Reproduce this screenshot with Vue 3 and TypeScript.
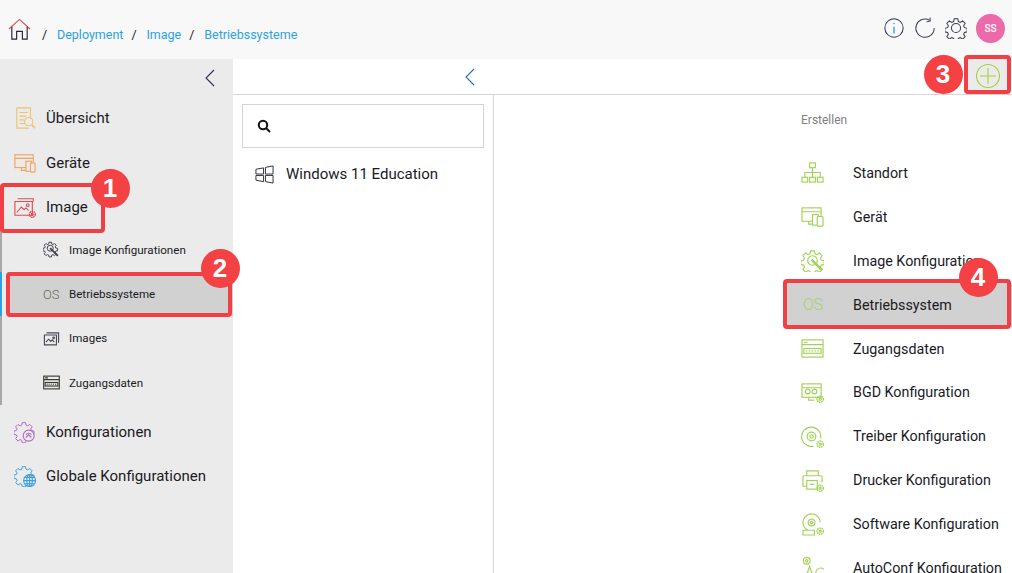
<script setup lang="ts">
interface NavItem {
  label: string;
  icon: string;
  tone: string;
  active?: boolean;
}

const gearPath =
  "M10 2h4l.6 3 2 .9 2.6-1.7 2.800 2.800-1.700 2.600.9 2 3 .6v4l-3 .6-.9 2 1.700 2.600-2.800 2.800-2.600-1.700-2 .9-.6 3h-4l-.6-3-2-.9-2.600 1.700-2.800-2.800 1.700-2.600-.9-2-3-.6v-4l3-.6.9-2-1.700-2.600 2.800-2.800 2.600 1.700 2-.9z";

const smallGear = (x: number, y: number) =>
  `<circle cx="${x}" cy="${y}" r="3.2" stroke-dasharray="1.6 .7" stroke-width="1.6"/><circle cx="${x}" cy="${y}" r="1.1"/>`;

const icons: Record<string, string> = {
  overview:
    '<path d="M3 1h15v12M3 1v22h13M6 6h9M6 10h7M6 14h5M6 18h6"/><circle cx="16" cy="16" r="4.500"/><path d="M19.500 19.500l3.500 3.500" stroke-width="2"/>',
  devices:
    '<rect x="1" y="3" width="20" height="14"/><path d="M1 7h20M8 17v3h6"/><rect x="13" y="10" width="6" height="11" fill="#ebebeb"/><rect x="18" y="12" width="5" height="10" rx="1" fill="#ebebeb"/>',
  image:
    '<path d="M4 3h17v3M1 6h19v15H1z"/><path d="M3 18l5-6 3 3 2-2 3 3"/><circle cx="15" cy="10" r="1.500"/>' +
    smallGear(20, 20),
  imageCfg: `<g transform="scale(.85)"><path d="${gearPath}"/><circle cx="12" cy="12" r="5"/></g><path d="M10 10l11 11" stroke-width="2.500"/>`,
  images:
    '<path d="M5 4h17v14M2 7h17v14H2z"/><path d="M4 17l4-4 3 3 2-2 3 3"/><circle cx="15" cy="11" r="1.200"/>',
  access:
    '<rect x="1" y="3" width="22" height="18"/><path d="M1 8h22M3 5.500h4" /><rect x="3" y="12" width="18" height="5"/><path d="M5 14.500h14" stroke-dasharray="1.500 1.500"/>',
  config: `<g transform="scale(.9)"><path d="${gearPath}"/></g><circle cx="16" cy="16" r="6" fill="#ebebeb"/><path d="M13 15a3.500 3.500 0 0 1 6 0M13 18l3-3 3 3"/>`,
  global: `<g transform="scale(.9)"><path d="${gearPath}"/></g><circle cx="17" cy="17" r="6.500" fill="#ebebeb"/><path d="M10.500 17h13M17 10.500v13M12 13.500h10M12 20.500h10"/><ellipse cx="17" cy="17" rx="3" ry="6.500"/>`,
  site:
    '<rect x="9" y="2" width="6" height="5"/><rect x="1" y="17" width="6" height="5"/><rect x="9" y="17" width="6" height="5"/><rect x="17" y="17" width="6" height="5"/><path d="M12 7v10M4 17v-5h16v5"/>',
  device:
    '<rect x="1" y="3" width="20" height="14"/><path d="M1 7h20M8 17v3h6"/><rect x="12" y="10" width="6" height="11" fill="#fff"/><rect x="17" y="12" width="6" height="10" rx="1" fill="#fff"/>',
  imageCfgGreen: `<path d="${gearPath}"/><circle cx="12" cy="12" r="5"/><path d="M11 11l11 11" stroke-width="2.500"/>`,
  bgd:
    '<rect x="1" y="3" width="20" height="14"/><path d="M1 7h20M8 17v3h6"/><circle cx="7" cy="11" r="2.500"/><circle cx="14" cy="11" r="2.500"/>' +
    smallGear(20, 19),
  driver:
    '<path d="M20.500 14A10 10 0 1 0 13 22"/><circle cx="11" cy="12" r="4.500"/><circle cx="11" cy="12" r="1.800"/>' +
    smallGear(20, 20),
  printer:
    '<path d="M6 7V2h12v5M6 18H2V8a1 1 0 0 1 1-1h18a1 1 0 0 1 1 1v6"/><rect x="6" y="12" width="11" height="9"/><path d="M9 16h5"/>' +
    smallGear(20, 20),
  software:
    '<path d="M20 10A9 9 0 1 0 7 18"/><circle cx="11" cy="10" r="3.500"/><circle cx="11" cy="10" r="1.300"/><path d="M2 18h12v5H2z"/>' +
    smallGear(20, 19),
  autoconf:
    '<circle cx="6" cy="5" r="3.500"/><circle cx="6" cy="5" r="1.200"/><path d="M5 22l4-11 4 11M6.500 18h5M24 14a5 5 0 1 0 0 7"/>',
};

const topBefore: NavItem[] = [
  { label: "Übersicht", icon: "overview", tone: "#f2c26e" },
  { label: "Geräte", icon: "devices", tone: "#f3a25c" },
  { label: "Image", icon: "image", tone: "#e04a55" },
];

const subItems: NavItem[] = [
  { label: "Image Konfigurationen", icon: "imageCfg", tone: "#3f3d4a" },
  { label: "Betriebssysteme", icon: "os", tone: "#6f6b62", active: true },
  { label: "Images", icon: "images", tone: "#4b4a58" },
  { label: "Zugangsdaten", icon: "access", tone: "#3d3a34" },
];

const topAfter: NavItem[] = [
  { label: "Konfigurationen", icon: "config", tone: "#b06ec4" },
  { label: "Globale Konfigurationen", icon: "global", tone: "#3f9fdc" },
];

const green = "#a2d158";
const createItems: NavItem[] = [
  { label: "Standort", icon: "site", tone: green },
  { label: "Gerät", icon: "device", tone: green },
  { label: "Image Konfiguration", icon: "imageCfgGreen", tone: green },
  { label: "Betriebssystem", icon: "os", tone: "#a9cf6c", active: true },
  { label: "Zugangsdaten", icon: "access", tone: green },
  { label: "BGD Konfiguration", icon: "bgd", tone: green },
  { label: "Treiber Konfiguration", icon: "driver", tone: green },
  { label: "Drucker Konfiguration", icon: "printer", tone: green },
  { label: "Software Konfiguration", icon: "software", tone: green },
  { label: "AutoConf Konfiguration", icon: "autoconf", tone: green },
];

const crumbs = ["Deployment", "Image", "Betriebssysteme"];

const marks = [
  { n: 1, x: 110, y: 188 },
  { n: 2, x: 220, y: 268 },
  { n: 3, x: 943, y: 74 },
  { n: 4, x: 978, y: 277 },
];
const frames = [
  { x: 0, y: 183, w: 105, h: 50 },
  { x: 6, y: 272, w: 226, h: 45 },
  { x: 964, y: 55, w: 47, h: 39 },
  { x: 783, y: 279, w: 228, h: 50 },
];
</script>

<template>
  <div class="page">
    <header class="topbar">
      <svg class="home" viewBox="0 0 24 24" fill="none" stroke-width="1.200">
        <path d="M1 11.500L12 1.500l11 10" stroke="#d9534a" />
        <path d="M4 9v13h5v-8h6v8h5V9" stroke="#23263a" />
      </svg>
      <nav class="crumbs">
        <template v-for="c in crumbs" :key="c">
          <span class="sep">/</span>
          <a class="crumb">{{ c }}</a>
        </template>
      </nav>
      <div class="tools">
        <svg viewBox="0 0 24 24" fill="none" stroke="#2a3350" stroke-width="1.100">
          <circle cx="12" cy="12" r="10" />
          <path d="M12 10.500V18" stroke="#2e9fdc" stroke-width="1.500" />
          <circle cx="12" cy="7" r=".8" fill="#2e9fdc" stroke="none" />
        </svg>
        <svg viewBox="0 0 24 24" fill="none" stroke="#3a4150" stroke-width="1.100">
          <path d="M17 3.500A10 10 0 1 0 22 12" />
          <path d="M17.500 .5l.2 4-4 .6" />
        </svg>
        <svg viewBox="0 0 24 24" fill="none" stroke="#3a3d48" stroke-width="1.100">
          <path :d="gearPath" />
          <circle cx="12" cy="12" r="5" />
        </svg>
        <span class="avatar">SS</span>
      </div>
    </header>

    <div class="body">
      <aside class="sidebar">
        <div class="collapse">
          <svg viewBox="0 0 12 18" fill="none" stroke="#2a3350" stroke-width="1.100">
            <path d="M10 1L2 9l8 8" />
          </svg>
        </div>
        <div v-for="item in topBefore" :key="item.label" class="nav-row">
          <svg class="nav-icon" viewBox="0 0 24 24" fill="none" stroke-width="1.200" :style="{ stroke: item.tone }" v-html="icons[item.icon]" />
          <span>{{ item.label }}</span>
        </div>
        <div class="sublist">
          <div v-for="item in subItems" :key="item.label" class="sub-row" :class="{ active: item.active }">
            <span v-if="item.icon === 'os'" class="os sub-icon" :style="{ color: item.tone }">OS</span>
            <svg v-else class="sub-icon" viewBox="0 0 24 24" fill="none" stroke-width="1.600" :style="{ stroke: item.tone }" v-html="icons[item.icon]" />
            <span>{{ item.label }}</span>
          </div>
        </div>
        <div v-for="item in topAfter" :key="item.label" class="nav-row after">
          <svg class="nav-icon" viewBox="0 0 24 24" fill="none" stroke-width="1.200" :style="{ stroke: item.tone }" v-html="icons[item.icon]" />
          <span>{{ item.label }}</span>
        </div>
      </aside>

      <main class="main">
        <div class="toolbar">
          <div class="back">
            <svg viewBox="0 0 12 18" fill="none" stroke="#2a6fb0" stroke-width="1.100">
              <path d="M10 1L2 9l8 8" />
            </svg>
          </div>
          <button class="add">
            <svg viewBox="0 0 26 26" fill="none" stroke="#a4d233" stroke-width="1.100">
              <circle cx="13" cy="13" r="11.500" />
              <path d="M13 5v16M5 13h16" />
            </svg>
          </button>
        </div>
        <div class="columns">
          <section class="list">
            <div class="search">
              <svg viewBox="0 0 14 14" fill="none" stroke="#111" stroke-width="2">
                <circle cx="6" cy="6" r="4.200" />
                <path d="M9 9l4 4" />
              </svg>
            </div>
            <div class="os-row">
              <svg viewBox="0 0 20 20" fill="none" stroke="#2b2a3c" stroke-width="1">
                <path d="M1 4.500L9 3v6.500H1zM11 2.500L19 1v8.500h-8zM1 11h8v6.500L1 16zM11 11h8v8l-8-1.500z" />
              </svg>
              <span>Windows 11 Education</span>
            </div>
          </section>
          <section class="create">
            <div class="create-title">Erstellen</div>
            <div v-for="item in createItems" :key="item.label" class="create-row" :class="{ active: item.active }">
              <span v-if="item.icon === 'os'" class="os create-icon" :style="{ color: item.tone }">OS</span>
              <svg v-else class="create-icon" viewBox="0 0 24 24" fill="none" stroke-width="1.200" :style="{ stroke: item.tone }" v-html="icons[item.icon]" />
              <span>{{ item.label }}</span>
            </div>
          </section>
        </div>
      </main>
    </div>

    <div
      v-for="(f, i) in frames"
      :key="'f' + i"
      class="frame"
      :style="{ left: f.x + 'px', top: f.y + 'px', width: f.w + 'px', height: f.h + 'px' }"
    />
    <div
      v-for="m in marks"
      :key="m.n"
      class="mark"
      :style="{ left: m.x - 19.5 + 'px', top: m.y - 19.5 + 'px' }"
    >
      {{ m.n }}
    </div>
  </div>
</template>

<style>
html,
body {
  margin: 0;
  overflow: hidden;
}
</style>

<style scoped>
.page {
  position: relative;
  width: 1012px;
  height: 573px;
  overflow: hidden;
  display: flex;
  flex-direction: column;
  background: #fff;
  color: #1a1a1f;
  font-family: Roboto, "Liberation Sans", sans-serif;
}

.topbar {
  height: 59px;
  flex: none;
  display: flex;
  align-items: center;
  background: #f8f8f8;
  padding: 0 7px 0 8px;
  box-sizing: border-box;
}
.home {
  width: 23px;
  height: 23px;
  margin-bottom: 1px;
}
.crumbs {
  display: flex;
  align-items: center;
  font-size: 12.500px;
  margin-top: 9px;
  margin-left: 11px;
}
.sep {
  width: 15px;
  color: #222;
}
.crumb {
  color: #2ba3e3;
  margin-right: 8px;
}
.tools {
  margin-left: auto;
  display: flex;
  align-items: center;
  gap: 9px;
  margin-top: -3px;
}
.tools svg {
  width: 22px;
  height: 22px;
}
.avatar {
  width: 29px;
  height: 29px;
  border-radius: 50%;
  background: #ec6aa9;
  color: #fff;
  font-size: 10px;
  font-weight: 500;
  display: flex;
  align-items: center;
  justify-content: center;
}

.body {
  flex: 1;
  display: flex;
  min-height: 0;
}

.sidebar {
  width: 233px;
  flex: none;
  background: #ebebeb;
}
.collapse {
  height: 37px;
  display: flex;
  align-items: center;
  justify-content: flex-end;
  padding-right: 17px;
}
.collapse svg {
  width: 12px;
  height: 18px;
}
.nav-row {
  height: 44.500px;
  display: flex;
  align-items: center;
  padding-left: 14px;
  gap: 10px;
  font-size: 15px;
}
.nav-row.after {
  height: 44px;
}
.nav-icon {
  width: 22px;
  height: 22px;
  flex: none;
}
.sublist {
  border-left: 2px solid #a8a8a8;
  margin: -2px 0 5px;
}
.sub-row {
  height: 44.400px;
  display: flex;
  align-items: center;
  padding-left: 41px;
  gap: 9px;
  font-size: 11.600px;
  box-sizing: border-box;
}
.sub-row.active {
  position: relative;
  background: #d1d1d1;
  margin-left: 5px;
  padding-left: 36px;
}
.sub-row.active::before {
  content: "";
  position: absolute;
  left: -7px;
  top: 0;
  bottom: 0;
  width: 2px;
  background: #2ba3e3;
}
.sub-icon {
  width: 17px;
  height: 17px;
  flex: none;
}
.os {
  display: inline-flex;
  align-items: center;
  font-weight: 300;
}
.sub-icon.os {
  font-size: 13px;
}

.main {
  flex: 1;
  min-width: 0;
  display: flex;
  flex-direction: column;
}
.toolbar {
  height: 36px;
  box-sizing: border-box;
  flex: none;
  display: flex;
  align-items: center;
  justify-content: space-between;
  border-bottom: 1px solid #d6d6d6;
}
.back {
  width: 243px;
  display: flex;
  justify-content: flex-end;
}
.back svg {
  width: 12px;
  height: 18px;
}
.add {
  align-self: flex-start;
  width: 46px;
  height: 33px;
  margin-right: 1px;
  padding: 0;
  border: 0;
  background: #ebebeb;
  display: flex;
  align-items: center;
  justify-content: center;
}
.add svg {
  width: 26px;
  height: 26px;
}

.columns {
  flex: 1;
  display: flex;
  min-height: 0;
}
.list {
  width: 260px;
  flex: none;
  border-right: 1px solid #d6d6d6;
}
.search {
  height: 42px;
  margin: 9px 9px 0;
  border: 1px solid #d4d4d4;
  display: flex;
  align-items: center;
  padding-left: 14px;
}
.search svg {
  width: 14px;
  height: 14px;
}
.os-row {
  display: flex;
  align-items: center;
  gap: 12px;
  margin-top: 14px;
  padding-left: 22px;
  font-size: 15px;
  height: 24px;
}
.os-row svg {
  width: 19px;
  height: 19px;
}

.create {
  flex: 1;
  padding-left: 289px;
  overflow: hidden;
}
.create-title {
  color: #808080;
  font-size: 12px;
  line-height: 16px;
  padding: 17px 0 23px 18px;
}
.create-row {
  height: 43.900px;
  display: flex;
  align-items: center;
  padding-left: 18px;
  gap: 29px;
  font-size: 14.300px;
  white-space: nowrap;
}
.create-row.active {
  background: #d1d1d1;
}
.create-icon {
  width: 23px;
  height: 23px;
  flex: none;
}
.create-icon.os {
  font-size: 16px;
  padding-left: 2px;
  box-sizing: border-box;
}

.frame {
  position: absolute;
  box-sizing: border-box;
  border: 4px solid #f04045;
  border-radius: 4px;
}
.mark {
  position: absolute;
  width: 39px;
  height: 39px;
  border-radius: 50%;
  background: #f34144;
  color: #fff;
  font-size: 26px;
  font-weight: 700;
  font-family: "Liberation Sans", Arial, sans-serif;
  display: flex;
  align-items: center;
  justify-content: center;
}
</style>
